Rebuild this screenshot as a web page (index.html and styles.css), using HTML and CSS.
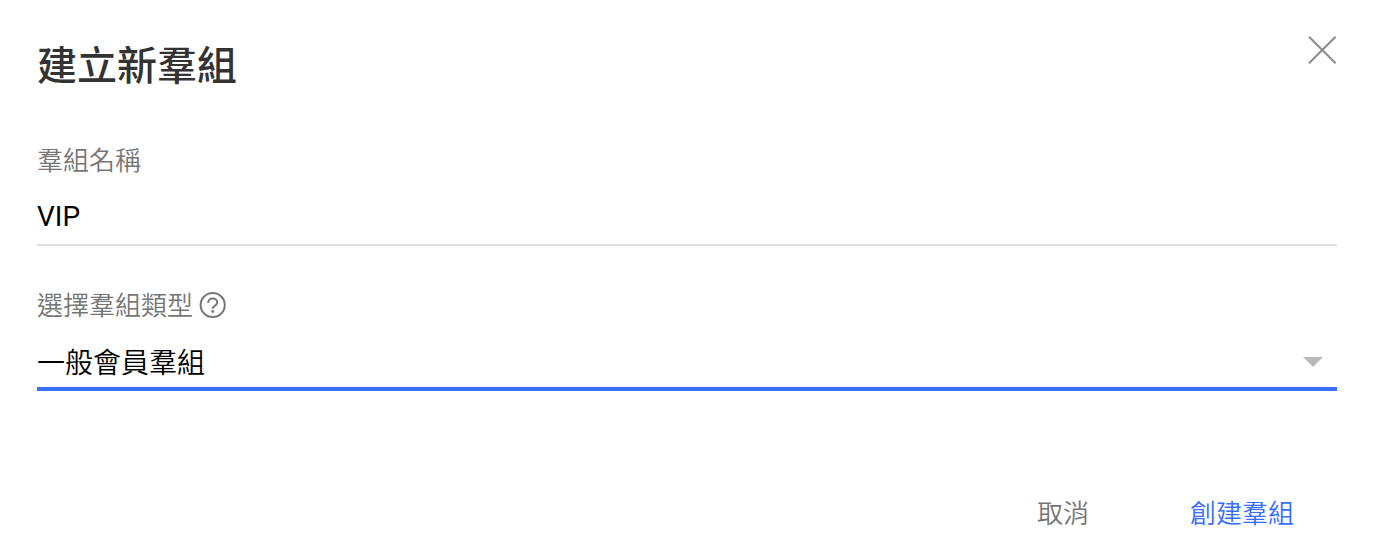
FILE: index.html
```html
<!DOCTYPE html>
<html lang="zh-Hant">
<head>
<meta charset="utf-8">
<meta name="viewport" content="width=device-width, initial-scale=1">
<title>建立新羣組</title>
<link rel="stylesheet" href="styles.css">
</head>
<body>
<form class="dialog">
  <header class="dialog-header">
    <h1 class="dialog-title">建立新羣組</h1>
    <button class="close" type="button" aria-label="關閉">
      <svg width="29" height="28" viewBox="0 0 29 28" fill="none" stroke="currentColor" stroke-width="2"><path d="M1 .7l26.6 26.6M27.6.7 1 27.3"/></svg>
    </button>
  </header>
  <div class="field">
    <label class="label" for="name">羣組名稱</label>
    <input class="control" id="name" type="text" value="VIP">
  </div>
  <div class="field field-active">
    <div class="label-row">
      <label class="label" for="type">選擇羣組類型</label>
      <button class="help" type="button" aria-label="說明">
        <svg width="28" height="28" viewBox="0 0 28 28" fill="none" stroke="currentColor" stroke-width="2"><circle cx="13.7" cy="14" r="12.1"/><path d="M9.2 11.7c0-2.6 2-4.2 4.5-4.2s4.5 1.6 4.5 4c0 3.2-4.5 3.2-4.5 6.2"/><circle cx="13.7" cy="20.5" r="1.4" fill="currentColor" stroke="none"/></svg>
      </button>
    </div>
    <div class="select-wrap">
      <select class="control" id="type"><option>一般會員羣組</option></select>
      <svg class="arrow" width="20" height="10" viewBox="0 0 20 10"><path d="M0 0h20L10 10z" fill="currentColor"/></svg>
    </div>
  </div>
  <footer class="actions">
    <button class="action" type="button">取消</button>
    <button class="action action-primary" type="submit">創建羣組</button>
  </footer>
</form>
</body>
</html>
```
FILE: styles.css
```css
* { box-sizing: border-box; }
body { margin: 0; background: #fff; }
body, button, input, select { font-family: "Noto Sans CJK TC", sans-serif; font-weight: 350; }
button { padding: 0; border: 0; background: none; cursor: pointer; }
svg { display: block; }
.dialog { padding: 36px 41px 16px 37px; }
.dialog-header { display: flex; justify-content: space-between; align-items: flex-start; }
.dialog-title { margin: 0; color: #333; font-size: 40px; font-weight: 500; line-height: 54px; }
.close { color: #8c8c8c; }
.field { margin-top: 50px; }
.field-active { margin-top: 39px; }
.label { display: block; color: #767676; font-size: 26px; line-height: 38px; }
.label-row { display: flex; align-items: center; gap: 6px; }
.help { padding-top: 2px; color: #767676; }
.control { display: block; width: 100%; height: 68px; margin: 0; padding: 12px 0 0; border: 0; border-bottom: 2px solid #e0e0e0; border-radius: 0; outline: 0; appearance: none; background: transparent; color: #000; font-size: 28px; }
input.control { padding-top: 10px; font-family: Roboto, "Noto Sans CJK TC", sans-serif; font-weight: 400; }
.field-active .control { border-bottom: 4px solid #376ffb; }
.select-wrap { position: relative; }
.arrow { position: absolute; top: 34px; right: 14px; color: #b8b8b8; pointer-events: none; }
.actions { display: flex; justify-content: flex-end; gap: 101px; margin-top: 102px; padding-right: 43px; }
.action { color: #767676; font-size: 26px; line-height: 38px; }
.action-primary { color: #376ffb; }
```
